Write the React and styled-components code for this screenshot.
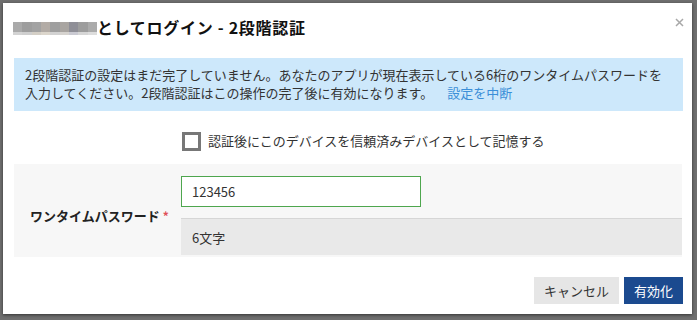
import styled, { createGlobalStyle } from "styled-components";

const GlobalStyle = createGlobalStyle`
    html, body {
        margin: 0;
        padding: 0;
        background: #6f6f6f;
    }
    body {
        font-family: "Noto Sans CJK JP", "Noto Sans", sans-serif;
        color: #333;
    }
`;

const Backdrop = styled.div`
    width: 697px;
    height: 320px;
    padding: 3px 0 0 3px;
    box-sizing: border-box;
`;

const Dialog = styled.div`
    width: 689px;
    height: 311px;
    background: #fff;
    box-shadow: 0 1px 3px rgba(0, 0, 0, 0.55);
    display: flex;
    flex-direction: column;
    padding: 0 10px 0 11px;
    box-sizing: border-box;
`;

const Header = styled.div`
    display: flex;
    justify-content: space-between;
    align-items: flex-start;
    padding: 12px 0 0 0;
    margin-left: -1px;
    height: 55px;
    box-sizing: border-box;
`;

const Title = styled.h2`
    margin: 0;
    display: flex;
    align-items: center;
    font-size: 16px;
    line-height: 24px;
    font-weight: 700;
    letter-spacing: 0.7px;
    color: #111;
`;

const Blur = styled.span`
    display: inline-grid;
    grid-template-columns: repeat(9, 9.33px);
    grid-template-rows: 10px 3px;
    margin-top: 2px;
`;

const BlurCell = styled.span`
    background: ${(p) => p.$c};
`;

const Close = styled.button`
    border: none;
    background: none;
    padding: 0;
    margin: 1px -3px 0 0;
    width: 12px;
    height: 12px;
    display: flex;
    align-items: center;
    justify-content: center;
    cursor: pointer;
`;

const Notice = styled.div`
    background: #cde8fb;
    padding: 8px 11px 9px 11px;
    font-size: 13px;
    line-height: 18px;
    color: #333;
    margin-right: -1px;
`;

const NoticeLink = styled.a`
    color: #3b8fd8;
    text-decoration: none;
    margin-left: 14px;
`;

const CheckRow = styled.label`
    display: flex;
    align-items: center;
    gap: 7px;
    padding: 20px 0 13px 168px;
    height: 20px;
    box-sizing: content-box;
    font-size: 13px;
    line-height: 20px;
    color: #333;
`;

const Box = styled.span`
    width: 19px;
    height: 19px;
    border: 3px solid #777;
    box-sizing: border-box;
    background: #fff;
`;

const Form = styled.div`
    background: #f7f7f7;
    display: grid;
    grid-template-columns: 167px 1fr;
    padding: 12px 0 2px 0;
`;

const Label = styled.div`
    display: flex;
    align-items: center;
    padding-left: 16px;
    font-size: 13px;
    font-weight: 700;
    color: #222;
`;

const Required = styled.span`
    color: #e0505a;
    margin-left: 3px;
    font-size: 12px;
`;

const Field = styled.div`
    display: flex;
    flex-direction: column;
    gap: 11px;
`;

const Input = styled.input`
    width: 240px;
    height: 31px;
    box-sizing: border-box;
    border: 1px solid #4ea64e;
    padding: 0 10px;
    font-family: inherit;
    font-size: 13px;
    color: #333;
    background: #fff;
    outline: none;
`;

const Hint = styled.div`
    background: #e9e9e9;
    border-top: 1px solid #d6d6d6;
    height: 37px;
    box-sizing: border-box;
    display: flex;
    align-items: center;
    padding-left: 11px;
    font-size: 13px;
    color: #333;
`;

const Footer = styled.div`
    display: flex;
    justify-content: flex-end;
    gap: 5px;
    margin-top: 20px;
    margin-right: -1px;
`;

const Btn = styled.button`
    height: 27px;
    padding: 0 10px;
    border: none;
    font-family: inherit;
    font-size: 13px;
    background: ${(p) => (p.$primary ? "#1b4a8f" : "#e6e6e6")};
    color: ${(p) => (p.$primary ? "#fff" : "#333")};
    cursor: pointer;
`;

const blurTop = ["#aaaaaa", "#9e9e9e", "#a3a3a3", "#b3aca6", "#9f9f9f", "#a9a5a1", "#8f8f97", "#9d9d9d", "#ababab"];
const blurBottom = ["#d3d3d3", "#cfcfcf", "#d4cfc6", "#dcd6cc", "#d2d2d2", "#d6d3cf", "#cacad2", "#d6d6d6", "#dddddd"];

export default function App() {
    return (
        <>
            <GlobalStyle />
            <Backdrop>
                <Dialog>
                    <Header>
                        <Title>
                            <Blur>
                                {blurTop.concat(blurBottom).map((c, i) => (
                                    <BlurCell key={i} $c={c} />
                                ))}
                            </Blur>
                            としてログイン - 2段階認証
                        </Title>
                        <Close aria-label="閉じる">
                            <svg width="9" height="9" viewBox="0 0 9 9">
                                <path d="M1 1L8 8M8 1L1 8" stroke="#a8a8a8" strokeWidth="1.5" />
                            </svg>
                        </Close>
                    </Header>

                    <Notice>
                        2段階認証の設定はまだ完了していません。あなたのアプリが現在表示している6桁のワンタイムパスワードを
                        <br />
                        入力してください。2段階認証はこの操作の完了後に有効になります。
                        <NoticeLink href="#">設定を中断</NoticeLink>
                    </Notice>

                    <CheckRow>
                        <Box />
                        認証後にこのデバイスを信頼済みデバイスとして記憶する
                    </CheckRow>

                    <Form>
                        <Label>
                            ワンタイムパスワード<Required>*</Required>
                        </Label>
                        <Field>
                            <Input defaultValue="123456" />
                            <Hint>6文字</Hint>
                        </Field>
                    </Form>

                    <Footer>
                        <Btn>キャンセル</Btn>
                        <Btn $primary>有効化</Btn>
                    </Footer>
                </Dialog>
            </Backdrop>
        </>
    );
}
